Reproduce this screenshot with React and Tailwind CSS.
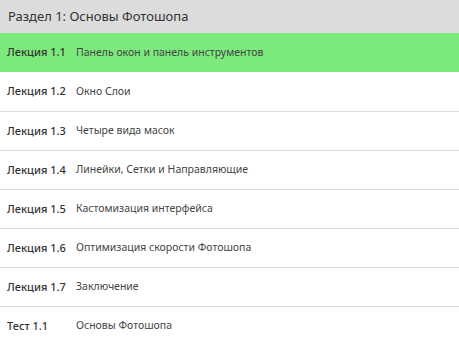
const lessons = [
  { label: 'Лекция 1.1', title: 'Панель окон и панель инструментов', active: true },
  { label: 'Лекция 1.2', title: 'Окно Слои' },
  { label: 'Лекция 1.3', title: 'Четыре вида масок' },
  { label: 'Лекция 1.4', title: 'Линейки, Сетки и Направляющие' },
  { label: 'Лекция 1.5', title: 'Кастомизация интерфейса' },
  { label: 'Лекция 1.6', title: 'Оптимизация скорости Фотошопа' },
  { label: 'Лекция 1.7', title: 'Заключение' },
  { label: 'Тест 1.1', title: 'Основы Фотошопа' },
];

export default function App() {
  return (
    <div className="w-[459px] h-[340px] bg-white overflow-hidden" style={{ fontFamily: '"Noto Sans", "Open Sans", sans-serif' }}>
      <div className="h-[33px] bg-[#dcdcdc] flex items-center pl-2 text-[13px] text-[#333]">
        Раздел 1: Основы Фотошопа
      </div>
      {lessons.map((l, i) => (
        <div
          key={i}
          className={`h-[39px] flex items-center pl-[7px] ${l.active ? 'bg-[#7ce97c]' : ''} ${i > 1 ? 'border-t border-[#dadada]' : ''}`}
        >
          <span className="w-[69px] shrink-0 text-[11px] font-medium text-[#333]">{l.label}</span>
          <span className="text-[10.5px] text-[#444]">{l.title}</span>
        </div>
      ))}
    </div>
  );
}
